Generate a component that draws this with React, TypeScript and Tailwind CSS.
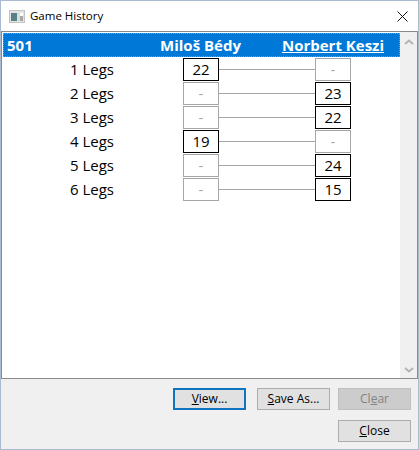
const font = { fontFamily: '"Open Sans", "Noto Sans", sans-serif' };

const legs = [
  { name: "1 Legs", left: "22", right: "-" },
  { name: "2 Legs", left: "-", right: "23" },
  { name: "3 Legs", left: "-", right: "22" },
  { name: "4 Legs", left: "19", right: "-" },
  { name: "5 Legs", left: "-", right: "24" },
  { name: "6 Legs", left: "-", right: "15" },
];

const ScoreBox = ({ value }: { value: string }) => {
  const empty = value === "-";
  return (
    <div
      className={`w-9 h-[23px] shrink-0 flex items-center justify-center bg-white border text-[15px] ${
        empty ? "border-[#a6a6a6] text-[#a6a6a6]" : "border-black text-black"
      }`}
    >
      {value}
    </div>
  );
};

const Btn = ({
  children,
  focused,
  disabled,
}: {
  children: React.ReactNode;
  focused?: boolean;
  disabled?: boolean;
}) => (
  <div
    className={`w-[73px] h-[22px] flex items-center justify-center text-[12px] ${
      focused
        ? "border-2 border-[#0f74c0] bg-[#e1e1e1] text-black"
        : disabled
          ? "border border-[#bfbfbf] bg-[#cccccc] text-[#838383]"
          : "border border-[#adadad] bg-[#e1e1e1] text-black"
    }`}
  >
    {children}
  </div>
);

const App = () => {
  return (
    <div
      style={font}
      className="w-[419px] h-[450px] flex flex-col bg-[#f0f0f0] border border-[#a9bbd3] overflow-hidden"
    >
      <div className="h-[30px] shrink-0 bg-white flex items-center pl-[8px] pr-[10px]">
        <svg width="16" height="13" viewBox="0 0 16 13" className="mr-[5px]">
          <rect x="0.5" y="0.5" width="15" height="12" fill="#e4e4e4" stroke="#c4c4c4" />
          <rect x="2" y="3" width="6" height="8" fill="#5b7f86" />
          <rect x="8" y="3" width="3" height="8" fill="#cfe3df" />
          <rect x="11" y="3" width="3" height="3" fill="#ffffff" />
          <rect x="11" y="6" width="3" height="5" fill="#a8a8a8" />
        </svg>
        <span className="text-[11.5px] text-black">Game History</span>
        <svg width="11" height="11" viewBox="0 0 11 11" className="ml-auto" fill="none" stroke="#111" strokeWidth="1">
          <path d="M0.5 0.5 L10.5 10.5 M10.5 0.5 L0.5 10.5" />
        </svg>
      </div>

      <div className="w-[417px] h-[348px] shrink-0 bg-white border border-[#8a8a8a] flex">
        <div className="flex-1 pt-px">
          <div className="ml-px h-6 bg-[#0078d7] border border-dotted border-[#6f9ec8] flex items-center text-white font-bold text-[15px] leading-none">
            <span className="pl-[3px] w-[131px]">501</span>
            <span className="w-[131px] text-center">Miloš Bédy</span>
            <span className="flex-1 text-center underline pl-px">Norbert Keszi</span>
          </div>
          <div className="flex flex-col gap-px pt-px">
            {legs.map((leg) => (
              <div key={leg.name} className="flex items-center h-[23px]">
                <div className="w-[181px] text-center text-[15px] text-black pr-px">{leg.name}</div>
                <ScoreBox value={leg.left} />
                <div className="w-[96px] h-px bg-[#a6a6a6]" />
                <ScoreBox value={leg.right} />
              </div>
            ))}
          </div>
        </div>
        <div className="w-[17px] shrink-0 bg-[#f0f0f0] flex flex-col justify-between items-center pt-[7px] pb-[5px]">
          <svg width="10" height="6" viewBox="0 0 10 6" fill="none" stroke="#b4b4b4" strokeWidth="2">
            <path d="M1 5 L5 1.5 L9 5" />
          </svg>
          <svg width="10" height="6" viewBox="0 0 10 6" fill="none" stroke="#b4b4b4" strokeWidth="2">
            <path d="M1 1 L5 4.5 L9 1" />
          </svg>
        </div>
      </div>

      <div className="flex-1 flex flex-col items-end pr-[7px] pt-[9px] gap-[10px]">
        <div className="flex">
          <Btn focused>
            <span><span className="underline">V</span>iew...</span>
          </Btn>
          <div className="w-[11px]" />
          <Btn>
            <span><span className="underline">S</span>ave As...</span>
          </Btn>
          <div className="w-2" />
          <Btn disabled>
            <span>Cl<span className="underline">e</span>ar</span>
          </Btn>
        </div>
        <Btn>
          <span><span className="underline">C</span>lose</span>
        </Btn>
      </div>
    </div>
  );
};

export default App;
